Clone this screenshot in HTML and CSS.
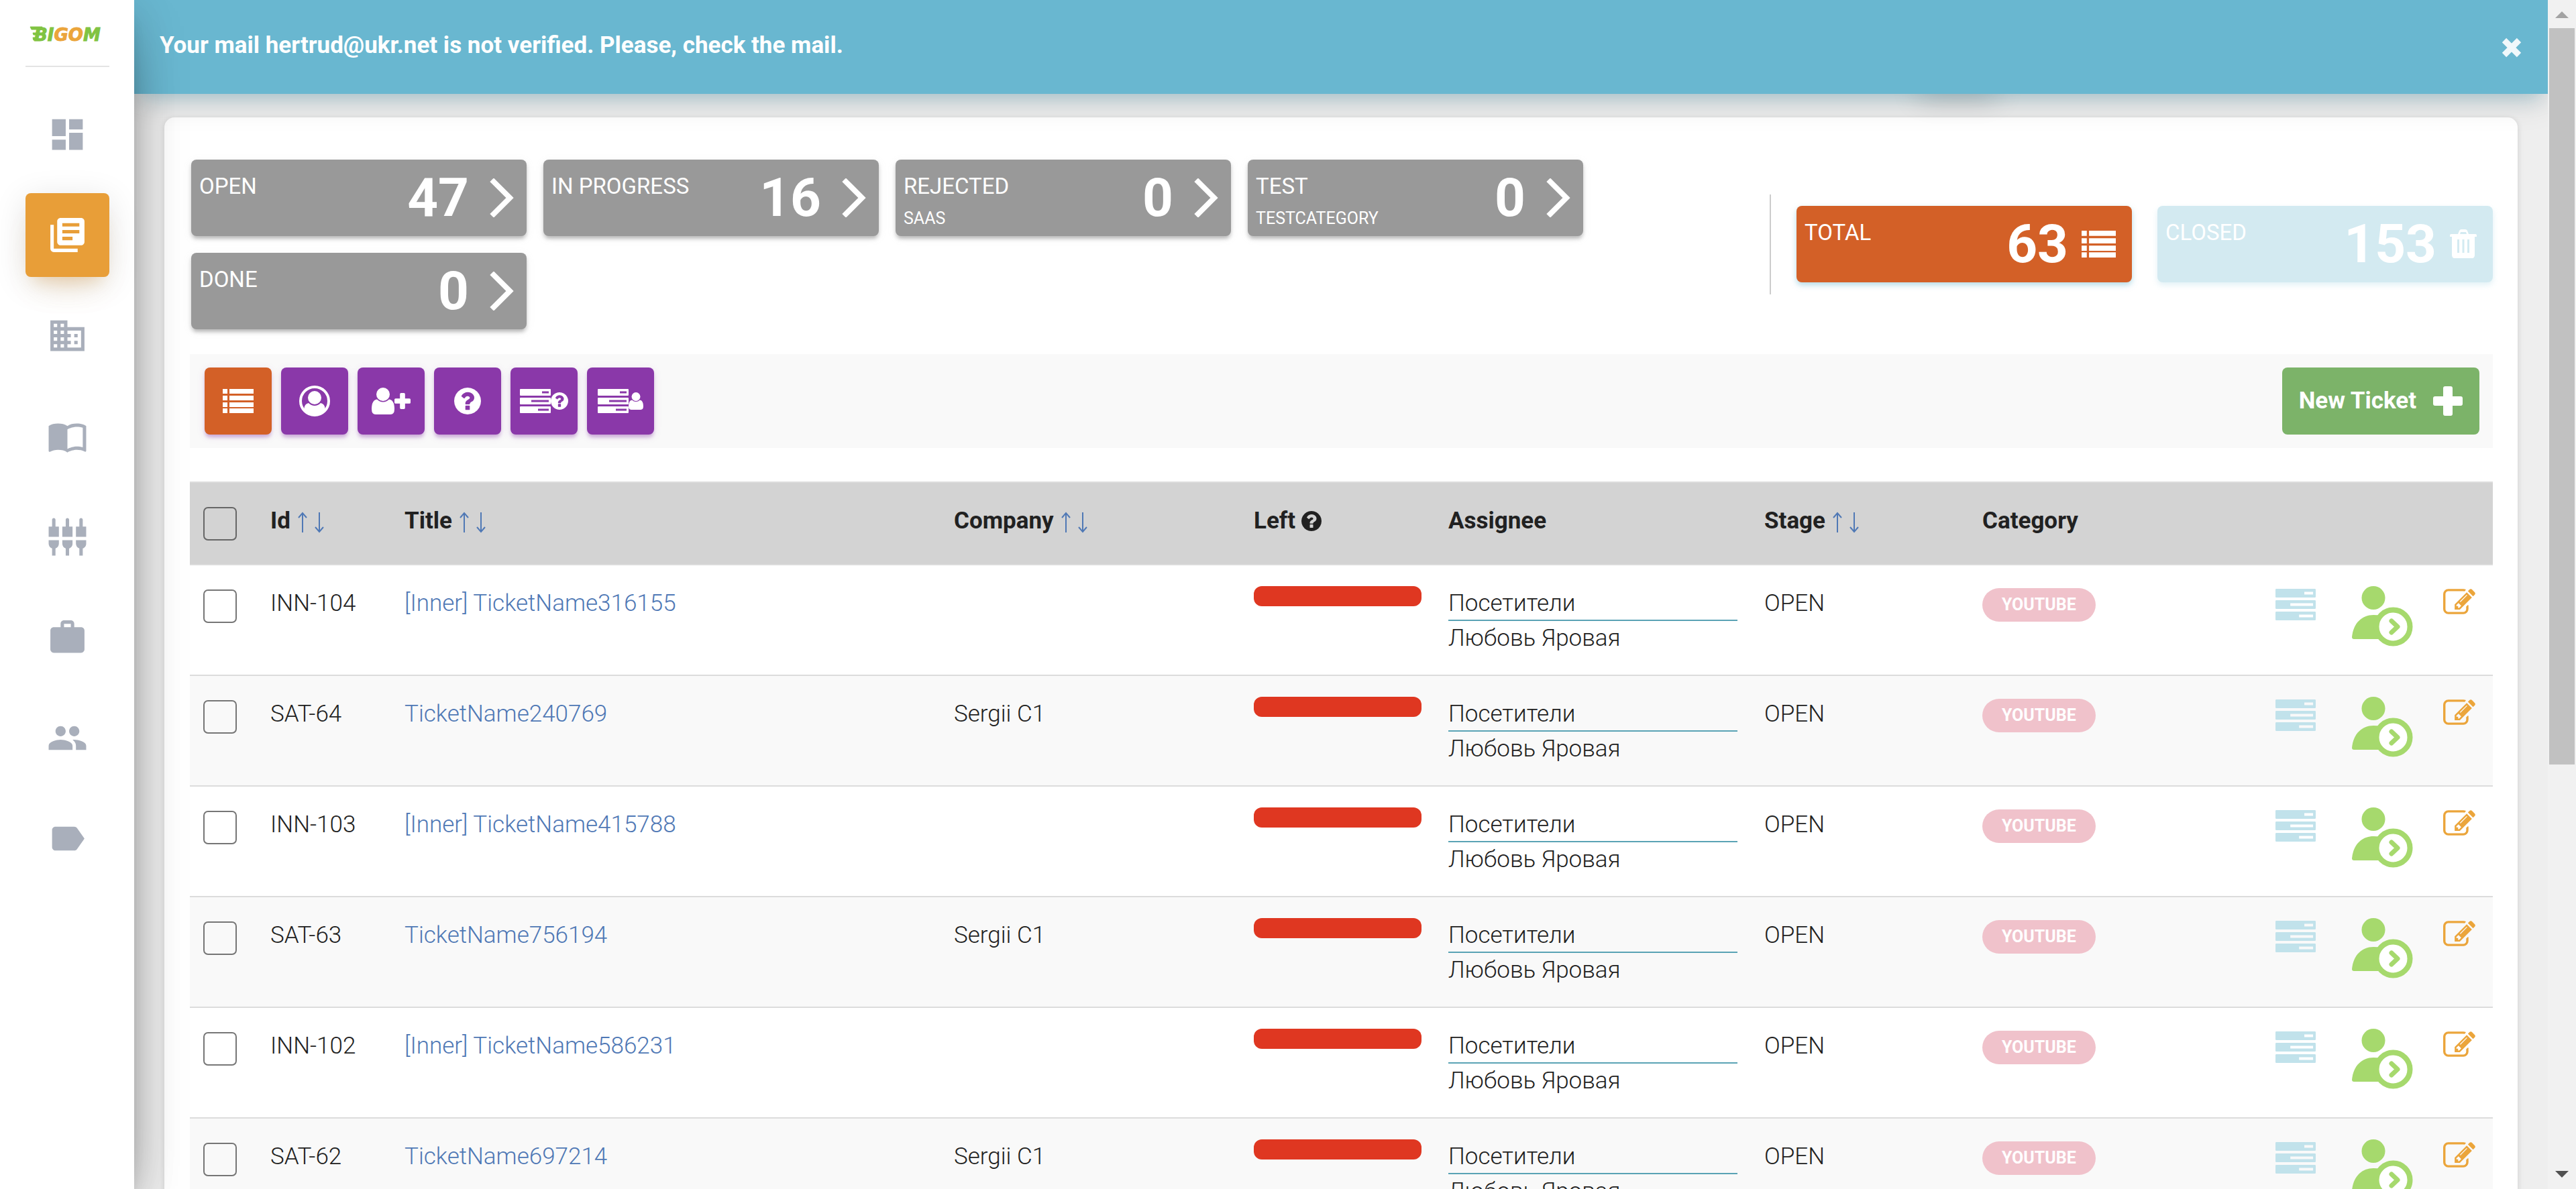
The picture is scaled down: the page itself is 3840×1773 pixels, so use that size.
FILE: index.html
```
<!DOCTYPE html>
<html lang="en">
<head>
<meta charset="utf-8">
<title>Bigom – Tickets</title>
<link rel="stylesheet" href="styles.css">
</head>
<body>
<svg class="sprite" aria-hidden="true">
  <symbol id="i-list" viewBox="0 0 46 36"><path d="M0 0h7v7H0zM10 0h36v7H10zM0 10h7v7H0zM10 10h36v7H10zM0 20h7v7H0zM10 20h36v7H10zM0 29h7v7H0zM10 29h36v7H10z"/></symbol>
  <symbol id="i-tasks" viewBox="0 0 46 36"><path fill-rule="evenodd" d="M1 0h44q1 0 1 1v8q0 1-1 1H1q-1 0-1-1V1q0-1 1-1zM33 3.500v3h10v-3zM1 13h44q1 0 1 1v8q0 1-1 1H1q-1 0-1-1v-8q0-1 1-1zM17 16.500v3h26v-3zM1 26h44q1 0 1 1v8q0 1-1 1H1q-1 0-1-1v-8q0-1 1-1zM27 29.500v3h16v-3z"/></symbol>
  <symbol id="i-question" viewBox="128 128 1536 1536"><path d="M1024 1376v-192q0-14-9-23t-23-9h-192q-14 0-23 9t-9 23v192q0 14 9 23t23 9h192q14 0 23-9t9-23zm256-672q0-88-55.500-163t-138.500-116-170-41q-243 0-371 213-15 24 8 42l132 100q7 6 19 6 16 0 25-12 53-68 86-92 34-24 86-24 48 0 85.500 26t37.500 59q0 38-20 61t-68 45q-63 28-115.500 86.500t-52.500 125.500v36q0 14 9 23t23 9h192q14 0 23-9t9-23q0-19 21.500-49.500t54.500-49.500q32-18 49-28.500t46-35 44.500-48 28-60.500 12.500-81zm384 192q0 209-103 385.500t-279.500 279.500-385.500 103-385.500-103-279.500-279.500-103-385.500 103-385.500 279.500-279.500 385.500-103 385.500 103 279.500 279.500 103 385.500z"/></symbol>
  <symbol id="i-user" viewBox="0 0 34 40"><circle cx="17" cy="10" r="10"/><path d="M8 17.500q4 4 9 4t9-4q8 1 8 14.500 0 8-6 8H6q-6 0-6-8 0-13.500 8-14.500z"/></symbol>
  <symbol id="i-plus" viewBox="0 0 44 44"><path d="M18 0h8q3 0 3 3v12h12q3 0 3 3v8q0 3-3 3H29v12q0 3-3 3h-8q-3 0-3-3V29H3q-3 0-3-3v-8q0-3 3-3h12V3q0-3 3-3z"/></symbol>
  <symbol id="i-chevron" viewBox="0 0 47 58"><path d="M17 5l24 24-24 24" fill="none" stroke="currentColor" stroke-width="8" stroke-linecap="square"/></symbol>
  <symbol id="i-trash" viewBox="0 0 40 44"><path fill-rule="evenodd" d="M12 7l2-5q1-2 3-2h6q2 0 3 2l2 5h10q2 0 2 2v2h-3v27q0 5-4 5H7q-4 0-4-5V11H0V9q0-2 2-2zM15 7h10l-1-3h-8zM11 15v20h3V15zM18.500 15v20h3V15zM26 15v20h3V15z"/></symbol>
  <symbol id="i-assign" viewBox="0 0 92 90"><circle cx="32" cy="17.500" r="17.500"/><path d="M3 79q-3 0-3-3C2 55 15 43 32 43q6 0 11 1v35z"/><circle class="assign-ring" cx="61.500" cy="60.500" r="25"/><path class="assign-arrow" d="M59 52l9 8.500-9 8.500"/></symbol>
  <symbol id="i-edit" viewBox="0 128 1792 1408"><path d="M888 1184l116-116-152-152-116 116v56h96v96h56zm440-720q-16-16-33 1l-350 350q-17 17-1 33t33-1l350-350q17-17 1-33zm80 594v190q0 119-84.500 203.500t-203.500 84.500h-832q-119 0-203.500-84.500t-84.500-203.500v-832q0-119 84.500-203.500t203.500-84.500h832q63 0 117 25 15 7 18 23 3 17-9 29l-49 49q-14 14-32 8-23-6-45-6h-832q-66 0-113 47t-47 113v832q0 66 47 113t113 47h832q66 0 113-47t47-113v-126q0-13 9-22l64-64q15-15 35-7t20 29zm-96-738l288 288-672 672h-288v-288zm444 132l-92 92-288-288 92-92q28-28 68-28t68 28l152 152q28 28 28 68t-28 68z"/></symbol>
  <symbol id="i-up" viewBox="0 0 14 32"><path d="M7 2v29M1 9l6-7 6 7" fill="none" stroke="currentColor" stroke-width="2"/></symbol>
  <symbol id="i-down" viewBox="0 0 14 32"><path d="M7 1v29M1 23l6 7 6-7" fill="none" stroke="currentColor" stroke-width="2"/></symbol>
</svg>

<div class="shell">
  <aside class="sidebar">
    <a class="logo" href="#" aria-label="Bigom">
      <svg viewBox="0 0 108 24"><path class="logo-green" d="M0 1h18l-2 4H2zM4 10h7l-1 3H5zM4 17h5l-1 4H5z"/><text x="6" y="22"><tspan class="logo-green">BI</tspan><tspan class="logo-orange">GO</tspan><tspan class="logo-green">M</tspan></text></svg>
    </a>
    <nav class="nav">
      <a class="nav-item" href="#" aria-label="Dashboard"><svg viewBox="0 0 24 24"><path d="M3 13h8V3H3v10zm0 8h8v-6H3v6zm10 0h8V11h-8v10zm0-18v6h8V3h-8z"/></svg></a>
      <a class="nav-item active" href="#" aria-label="Tickets"><svg viewBox="0 0 24 24"><path d="M4 6H2v14c0 1.100.9 2 2 2h14v-2H4V6zm16-4H8c-1.100 0-2 .9-2 2v12c0 1.100.9 2 2 2h12c1.100 0 2-.9 2-2V4c0-1.100-.9-2-2-2zm-1 9H9V9h10v2zm-4 4H9v-2h6v2zm4-8H9V5h10v2z"/></svg></a>
      <a class="nav-item" href="#" aria-label="Companies"><svg viewBox="0 0 24 24"><path d="M12 7V3H2v18h20V7H12zM6 19H4v-2h2v2zm0-4H4v-2h2v2zm0-4H4V9h2v2zm0-4H4V5h2v2zm4 12H8v-2h2v2zm0-4H8v-2h2v2zm0-4H8V9h2v2zm0-4H8V5h2v2zm10 12h-8v-2h2v-2h-2v-2h2v-2h-2V9h8v10zm-2-8h-2v2h2v-2zm0 4h-2v2h2v-2z"/></svg></a>
      <a class="nav-item" href="#" aria-label="Knowledge base"><svg viewBox="0 0 24 24"><path d="M21 5c-1.110-.35-2.330-.5-3.500-.5-1.950 0-4.050.4-5.500 1.500-1.450-1.100-3.550-1.500-5.500-1.500S2.450 4.900 1 6v14.650c0 .25.25.5.5.5.1 0 .15-.05.25-.05C3.100 20.450 5.050 20 6.500 20c1.950 0 4.050.4 5.500 1.500 1.350-.85 3.800-1.500 5.500-1.500 1.650 0 3.350.3 4.750 1.050.1.05.15.05.25.05.25 0 .5-.25.5-.5V6c-.6-.45-1.250-.75-2-1zm0 13.500c-1.100-.35-2.300-.5-3.500-.5-1.700 0-4.150.65-5.500 1.500V8c1.350-.85 3.800-1.500 5.500-1.500 1.200 0 2.400.15 3.500.5v11.500z"/></svg></a>
      <a class="nav-item" href="#" aria-label="Integrations"><svg viewBox="0 0 24 24"><path d="M5 2c0-.55-.45-1-1-1s-1 .45-1 1v4H1v6h6V6H5V2zm4 14c0 1.300.84 2.400 2 2.820V23h2v-4.180c1.160-.41 2-1.510 2-2.820v-2H9v2zm-8 0c0 1.300.84 2.400 2 2.820V23h2v-4.180C6.160 18.400 7 17.300 7 16v-2H1v2zM21 6V2c0-.55-.45-1-1-1s-1 .45-1 1v4h-2v6h6V6h-2zm-8-4c0-.55-.45-1-1-1s-1 .45-1 1v4H9v6h6V6h-2V2zm4 14c0 1.300.84 2.400 2 2.820V23h2v-4.180c1.160-.41 2-1.510 2-2.820v-2h-6v2z"/></svg></a>
      <a class="nav-item" href="#" aria-label="Projects"><svg viewBox="0 0 24 24"><path d="M20 6h-4V4c0-1.110-.89-2-2-2h-4c-1.110 0-2 .89-2 2v2H4c-1.110 0-1.990.89-1.990 2L2 19c0 1.110.89 2 2 2h16c1.110 0 2-.89 2-2V8c0-1.110-.89-2-2-2zm-6 0h-4V4h4v2z"/></svg></a>
      <a class="nav-item" href="#" aria-label="Users"><svg viewBox="0 0 24 24"><path d="M16 11c1.660 0 2.990-1.340 2.990-3S17.660 5 16 5c-1.660 0-3 1.340-3 3s1.340 3 3 3zm-8 0c1.660 0 2.990-1.340 2.990-3S9.660 5 8 5C6.340 5 5 6.340 5 8s1.340 3 3 3zm0 2c-2.330 0-7 1.170-7 3.500V19h14v-2.500c0-2.330-4.670-3.500-7-3.500zm8 0c-.29 0-.62.02-.97.05 1.160.84 1.970 1.970 1.970 3.450V19h6v-2.500c0-2.330-4.670-3.500-7-3.500z"/></svg></a>
      <a class="nav-item" href="#" aria-label="Labels"><svg viewBox="0 0 24 24"><path d="M17.630 5.840C17.270 5.330 16.670 5 16 5L5 5.010C3.900 5.010 3 5.900 3 7v10c0 1.100.9 1.990 2 1.990L16 19c.67 0 1.270-.33 1.630-.84L22 12l-4.370-6.160z"/></svg></a>
    </nav>
  </aside>

  <div class="page">
    <div class="alert" role="alert">
      <span>Your mail hertrud@ukr.net is not verified. Please, check the mail.</span>
      <button class="alert-close" type="button" aria-label="Close"><svg viewBox="0 0 32 32"><path d="M5 5l22 22M27 5L5 27"/></svg></button>
    </div>

    <main class="content">
      <section class="card">
        <div class="stats">
          <div class="stages">
            <button class="stat" type="button"><span class="stat-text"><span>OPEN</span></span><b>47</b><svg class="stat-go"><use href="#i-chevron"/></svg></button>
            <button class="stat" type="button"><span class="stat-text"><span>IN PROGRESS</span></span><b>16</b><svg class="stat-go"><use href="#i-chevron"/></svg></button>
            <button class="stat" type="button"><span class="stat-text"><span>REJECTED</span><small>SAAS</small></span><b>0</b><svg class="stat-go"><use href="#i-chevron"/></svg></button>
            <button class="stat" type="button"><span class="stat-text"><span>TEST</span><small>TESTCATEGORY</small></span><b>0</b><svg class="stat-go"><use href="#i-chevron"/></svg></button>
            <button class="stat" type="button"><span class="stat-text"><span>DONE</span></span><b>0</b><svg class="stat-go"><use href="#i-chevron"/></svg></button>
          </div>
          <div class="totals">
            <button class="stat total" type="button"><span class="stat-text"><span>TOTAL</span></span><b>63</b><svg class="stat-list"><use href="#i-list"/></svg></button>
            <button class="stat closed" type="button"><span class="stat-text"><span>CLOSED</span></span><b>153</b><svg class="stat-trash"><use href="#i-trash"/></svg></button>
          </div>
        </div>

        <div class="toolbar">
          <button class="tool selected" type="button" aria-label="All tickets"><svg class="ic-list"><use href="#i-list"/></svg></button>
          <button class="tool" type="button" aria-label="My tickets"><svg class="ic-me" viewBox="0 0 46 46"><circle class="ring" cx="23" cy="23" r="21"/><circle cx="23" cy="18" r="10"/><path d="M14 26q4 4 9 4t9-4q6 1 7 9-6 9-16 9T7 35q1-8 7-9z"/></svg></button>
          <button class="tool" type="button" aria-label="Assigned"><svg class="ic-user"><use href="#i-user"/></svg><svg class="ic-plus"><use href="#i-plus"/></svg></button>
          <button class="tool" type="button" aria-label="Unassigned"><svg class="ic-question"><use href="#i-question"/></svg></button>
          <button class="tool" type="button" aria-label="Unassigned tasks"><svg class="ic-list"><use href="#i-tasks"/></svg><svg class="ic-small"><use href="#i-question"/></svg></button>
          <button class="tool" type="button" aria-label="User tasks"><svg class="ic-list"><use href="#i-tasks"/></svg><svg class="ic-small-user"><use href="#i-user"/></svg></button>
          <button class="new-ticket" type="button">New Ticket <svg><use href="#i-plus"/></svg></button>
        </div>

        <table class="tickets">
          <colgroup>
            <col class="c-check"><col class="c-id"><col><col class="c-company"><col class="c-left"><col class="c-assignee"><col class="c-stage"><col class="c-category"><col class="c-tasks"><col class="c-assign"><col class="c-edit">
          </colgroup>
          <thead>
            <tr>
              <th><input type="checkbox" aria-label="Select all"></th>
              <th>Id<a href="#" aria-label="Ascending"><svg><use href="#i-up"/></svg></a><a href="#" aria-label="Descending"><svg><use href="#i-down"/></svg></a></th>
              <th>Title<a href="#" aria-label="Ascending"><svg><use href="#i-up"/></svg></a><a href="#" aria-label="Descending"><svg><use href="#i-down"/></svg></a></th>
              <th>Company<a href="#" aria-label="Ascending"><svg><use href="#i-up"/></svg></a><a href="#" aria-label="Descending"><svg><use href="#i-down"/></svg></a></th>
              <th>Left <svg class="hint"><use href="#i-question"/></svg></th>
              <th>Assignee</th>
              <th>Stage<a href="#" aria-label="Ascending"><svg><use href="#i-up"/></svg></a><a href="#" aria-label="Descending"><svg><use href="#i-down"/></svg></a></th>
              <th>Category</th>
              <th></th><th></th><th></th>
            </tr>
          </thead>
          <tbody>
            <tr>
              <td><input type="checkbox" aria-label="Select INN-104"></td><td>INN-104</td><td><a href="#">[Inner] TicketName316155</a></td><td></td>
              <td><div class="bar"></div></td><td><div class="group">Посетители</div><div>Любовь Яровая</div></td><td>OPEN</td><td><span class="badge">YOUTUBE</span></td>
              <td><button type="button" aria-label="Tasks"><svg class="a-tasks"><use href="#i-tasks"/></svg></button></td><td><button type="button" aria-label="Assign"><svg class="a-assign"><use href="#i-assign"/></svg></button></td><td><button type="button" aria-label="Edit"><svg class="a-edit"><use href="#i-edit"/></svg></button></td>
            </tr>
            <tr>
              <td><input type="checkbox" aria-label="Select SAT-64"></td><td>SAT-64</td><td><a href="#">TicketName240769</a></td><td>Sergii C1</td>
              <td><div class="bar"></div></td><td><div class="group">Посетители</div><div>Любовь Яровая</div></td><td>OPEN</td><td><span class="badge">YOUTUBE</span></td>
              <td><button type="button" aria-label="Tasks"><svg class="a-tasks"><use href="#i-tasks"/></svg></button></td><td><button type="button" aria-label="Assign"><svg class="a-assign"><use href="#i-assign"/></svg></button></td><td><button type="button" aria-label="Edit"><svg class="a-edit"><use href="#i-edit"/></svg></button></td>
            </tr>
            <tr>
              <td><input type="checkbox" aria-label="Select INN-103"></td><td>INN-103</td><td><a href="#">[Inner] TicketName415788</a></td><td></td>
              <td><div class="bar"></div></td><td><div class="group">Посетители</div><div>Любовь Яровая</div></td><td>OPEN</td><td><span class="badge">YOUTUBE</span></td>
              <td><button type="button" aria-label="Tasks"><svg class="a-tasks"><use href="#i-tasks"/></svg></button></td><td><button type="button" aria-label="Assign"><svg class="a-assign"><use href="#i-assign"/></svg></button></td><td><button type="button" aria-label="Edit"><svg class="a-edit"><use href="#i-edit"/></svg></button></td>
            </tr>
            <tr>
              <td><input type="checkbox" aria-label="Select SAT-63"></td><td>SAT-63</td><td><a href="#">TicketName756194</a></td><td>Sergii C1</td>
              <td><div class="bar"></div></td><td><div class="group">Посетители</div><div>Любовь Яровая</div></td><td>OPEN</td><td><span class="badge">YOUTUBE</span></td>
              <td><button type="button" aria-label="Tasks"><svg class="a-tasks"><use href="#i-tasks"/></svg></button></td><td><button type="button" aria-label="Assign"><svg class="a-assign"><use href="#i-assign"/></svg></button></td><td><button type="button" aria-label="Edit"><svg class="a-edit"><use href="#i-edit"/></svg></button></td>
            </tr>
            <tr>
              <td><input type="checkbox" aria-label="Select INN-102"></td><td>INN-102</td><td><a href="#">[Inner] TicketName586231</a></td><td></td>
              <td><div class="bar"></div></td><td><div class="group">Посетители</div><div>Любовь Яровая</div></td><td>OPEN</td><td><span class="badge">YOUTUBE</span></td>
              <td><button type="button" aria-label="Tasks"><svg class="a-tasks"><use href="#i-tasks"/></svg></button></td><td><button type="button" aria-label="Assign"><svg class="a-assign"><use href="#i-assign"/></svg></button></td><td><button type="button" aria-label="Edit"><svg class="a-edit"><use href="#i-edit"/></svg></button></td>
            </tr>
            <tr>
              <td><input type="checkbox" aria-label="Select SAT-62"></td><td>SAT-62</td><td><a href="#">TicketName697214</a></td><td>Sergii C1</td>
              <td><div class="bar"></div></td><td><div class="group">Посетители</div><div>Любовь Яровая</div></td><td>OPEN</td><td><span class="badge">YOUTUBE</span></td>
              <td><button type="button" aria-label="Tasks"><svg class="a-tasks"><use href="#i-tasks"/></svg></button></td><td><button type="button" aria-label="Assign"><svg class="a-assign"><use href="#i-assign"/></svg></button></td><td><button type="button" aria-label="Edit"><svg class="a-edit"><use href="#i-edit"/></svg></button></td>
            </tr>
          </tbody>
        </table>
      </section>
    </main>
  </div>

  <div class="scrollbar" aria-hidden="true">
    <svg class="scroll-up" viewBox="0 0 40 42"><path d="M10 27L20 17l10 10z"/></svg>
    <div class="track"><div class="thumb"></div></div>
    <svg class="scroll-down" viewBox="0 0 40 42"><path d="M10 15h20L20 25z"/></svg>
  </div>
</div>
</body>
</html>
```
FILE: styles.css
```
* { box-sizing: border-box; }

body {
  margin: 0;
  background: #eee;
  color: #212121;
  font: 300 35px/52px Roboto, "Liberation Sans", sans-serif;
}

svg { display: block; fill: currentColor; }
a { color: #4f78b5; text-decoration: none; }
button { margin: 0; padding: 0; border: 0; background: none; color: inherit; font: inherit; cursor: pointer; }

.sprite { position: absolute; width: 0; height: 0; }

.shell { display: flex; height: 100vh; overflow: hidden; }

/* Sidebar */
.sidebar {
  position: relative;
  z-index: 3;
  flex: 0 0 200px;
  padding: 0 37px 0 38px;
  background: #fff;
  box-shadow: 0 40px 95px -30px rgba(0, 0, 0, .56), 0 10px 63px 0 rgba(0, 0, 0, .12), 0 20px 25px -13px rgba(0, 0, 0, .2);
}

.logo { display: block; height: 100px; padding: 39px 0 0 7px; border-bottom: 2px solid #e4e4e4; }
.logo svg { width: 108px; height: 24px; overflow: visible; font: italic 700 26px "DejaVu Sans", sans-serif; }
.logo-green { fill: #80c342; stroke: #80c342; }
.logo-orange { fill: #eba53b; stroke: #eba53b; }

.nav { display: flex; flex-direction: column; gap: 25px; padding-top: 38px; }
.nav-item {
  display: flex;
  align-items: center;
  justify-content: center;
  height: 125px;
  border-radius: 8px;
  color: #a9afbb;
}
.nav-item svg { width: 61px; height: 61px; }
.nav-item.active {
  background: #e89e38;
  color: #fff;
  box-shadow: 0 30px 50px -25px rgba(232, 158, 56, .28), 0 10px 50px 0 rgba(0, 0, 0, .12), 0 18px 20px -12px rgba(232, 158, 56, .2);
}

/* Page */
.page { position: relative; flex: 1; min-width: 0; }

.alert {
  position: relative;
  z-index: 2;
  display: flex;
  align-items: flex-start;
  justify-content: space-between;
  height: 140px;
  padding: 42px 38px;
  background: #69b7d0;
  color: #fff;
  font-weight: 700;
  box-shadow: 0 10px 50px 0 rgba(0, 0, 0, .14), 0 18px 25px -12px rgba(105, 183, 208, .4);
}
.alert-close { padding: 13px 0; }
.alert-close svg { width: 32px; height: 32px; }
.alert-close path { stroke: #f0f8fb; stroke-width: 9; }

.content { padding: 35px 45px; }
.content::before {
  content: "";
  position: absolute;
  top: 110px;
  right: 820px;
  width: 120px;
  height: 20px;
  border-radius: 10px;
  box-shadow: 0 12px 40px rgba(0, 0, 0, .3);
}

.card {
  padding: 63px 37px 38px 38px;
  border-radius: 15px;
  background: #fff;
  box-shadow: 0 2px 10px 0 rgba(0, 0, 0, .14);
}

/* Counters */
.stats { display: flex; align-items: center; justify-content: space-between; padding-left: 2px; }
.stages { display: flex; flex: 1; flex-wrap: wrap; gap: 25px; }
.totals { display: flex; gap: 38px; padding: 17px 0 18px 38px; border-left: 2px solid #ccc; }

.stat {
  display: flex;
  align-items: center;
  width: 500px;
  height: 114px;
  border-radius: 8px;
  background: #999;
  color: #fff;
  text-align: left;
  box-shadow: 0 5px 5px 0 rgba(153, 153, 153, .14), 0 8px 3px -5px rgba(153, 153, 153, .2), 0 3px 13px 0 rgba(153, 153, 153, .12), 0 4px 6px -1px rgba(0, 0, 0, .2);
}
.stat-text { display: flex; flex: 1; flex-direction: column; align-self: flex-start; gap: 15px; padding: 21px 0 0 12px; font-weight: 400; font-size: 33px; line-height: 37px; }
.stat-text small { font-size: 25px; line-height: 30px; }
.stat b { margin-right: 20px; font-weight: 700; font-size: 80px; line-height: 114px; }
.stat-go { width: 47px; height: 58px; margin-right: 19px; }
.stat-list { width: 51px; height: 40px; margin-right: 24px; }
.stat-trash { width: 40px; height: 44px; margin-right: 24px; }
.total { background: #d36027; box-shadow: 0 4px 8px 0 rgba(105, 183, 208, .5); }
.closed { background: #d3eaf1; box-shadow: 0 4px 8px 0 rgba(105, 183, 208, .2); }

/* Toolbar */
.toolbar { display: flex; gap: 14px; margin: 37px 0 50px; padding: 20px 20px 20px 22px; background: #f9f9f9; }
.tool {
  display: flex;
  align-items: center;
  justify-content: center;
  width: 100px;
  height: 100px;
  border-radius: 8px;
  background: #8a38a9;
  color: #fff;
  box-shadow: 0 5px 5px 0 rgba(138, 56, 169, .14), 0 5px 5px -2px rgba(138, 56, 169, .25), 0 3px 13px 0 rgba(138, 56, 169, .12);
}
.tool.selected { background: #d36027; }
.ic-list { width: 46px; height: 36px; }
.ic-me { width: 46px; height: 46px; }
.ic-me .ring { fill: none; stroke: currentColor; stroke-width: 4; }
.ic-user { width: 34px; height: 40px; }
.ic-plus { width: 24px; height: 24px; }
.ic-question { width: 40px; height: 40px; }
.ic-small { width: 26px; height: 26px; }
.ic-small-user { width: 22px; height: 26px; }

.new-ticket {
  display: flex;
  align-items: center;
  gap: 25px;
  height: 100px;
  margin-left: auto;
  padding: 0 25px;
  border-radius: 8px;
  background: #7cb369;
  color: #fff;
  font-weight: 700;
}
.new-ticket svg { width: 44px; height: 44px; }

/* Tickets */
.tickets { width: 100%; table-layout: fixed; border-collapse: separate; border-spacing: 0; text-align: left; }
.c-check { width: 100px; }
.c-id { width: 200px; }
.c-company { width: 447px; }
.c-left { width: 290px; }
.c-assignee { width: 471px; }
.c-stage { width: 325px; }
.c-category { width: 437px; }
.c-tasks { width: 114px; }
.c-assign { width: 136px; }
.c-edit { width: 94px; }

.tickets th, .tickets td { padding: 31px 20px 28px; border-top: 2px solid #dcdcdc; vertical-align: top; white-space: nowrap; }
.tickets th { padding-bottom: 35px; background: #d3d3d3; font-weight: 700; }
.tickets tbody tr:nth-child(even) { background: #f9f9f9; }

.tickets input {
  display: block;
  appearance: none;
  width: 50px;
  height: 50px;
  margin: 5px 0 0;
  border: 2px solid #767676;
  border-radius: 7px;
}
.tickets th input { border-color: #666; }

.tickets th a { display: inline-block; margin-left: 11px; vertical-align: middle; }
.tickets th a svg { width: 14px; height: 32px; }
.hint { display: inline-block; width: 30px; height: 30px; vertical-align: -4px; }

.bar { height: 30px; border-radius: 12px; background: #df3721; }
.group { height: 52px; border-bottom: 2px solid #5aa3b5; }

.badge {
  display: block;
  width: max-content;
  margin-top: 3px;
  padding: 0 29px;
  border-radius: 25px;
  background: #f0c2cb;
  color: #fff;
  font-weight: 700;
  font-size: 25px;
  line-height: 50px;
}

.tickets td button { display: block; }
.a-tasks { width: 60px; height: 47px; margin-top: 4px; color: #c1e2eb; }
.a-assign { width: 92px; height: 90px; color: #a6d96d; }
.assign-ring { fill: #fff; stroke: currentColor; stroke-width: 8; }
.assign-arrow { fill: none; stroke: currentColor; stroke-width: 7; stroke-linecap: round; stroke-linejoin: round; }
.a-edit { width: 48px; height: 38px; margin-top: 4px; color: #eba53b; }

/* Scrollbar */
.scrollbar { position: relative; z-index: 3; display: flex; flex: 0 0 42px; flex-direction: column; background: #f1f1f1; }
.scrollbar svg { height: 42px; color: #a3a3a3; }
.scrollbar .scroll-down { color: #505050; }
.track { flex: 1; padding: 0 2px; }
.thumb { height: 65%; background: #c1c1c1; }
```
